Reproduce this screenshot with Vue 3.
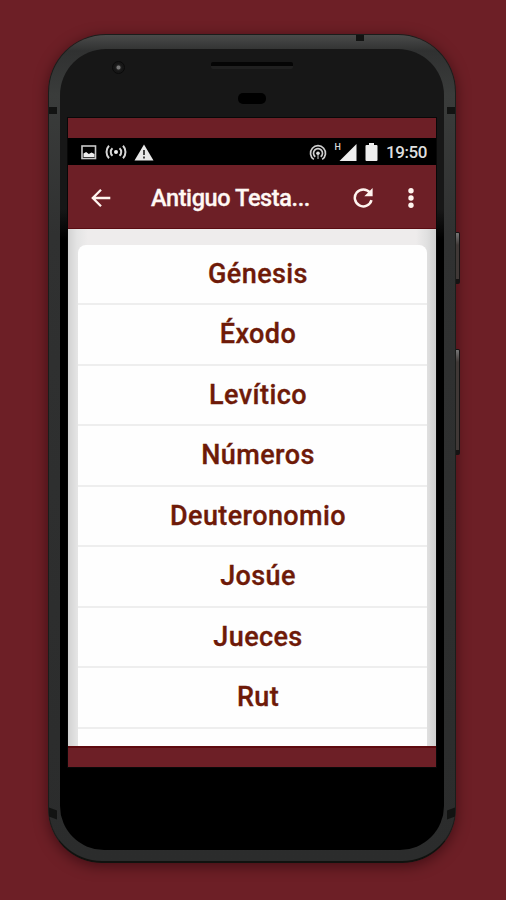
<template>
  <div class="page">
    <div class="phone">
      <i class="button power"></i>
      <i class="button volume"></i>
      <i class="band band-top"></i>
      <i class="band band-left"></i>
      <i class="band band-right"></i>
      <i class="band band-bottom-left"></i>
      <i class="band band-bottom-right"></i>
      <div class="face">
        <i class="camera"></i>
        <i class="speaker"></i>
        <i class="sensor"></i>
        <div class="screen">
          <div class="status-bar">
            <svg class="icon-image" width="16" height="15" viewBox="0 0 16 15">
              <rect x="1" y="1" width="13.5" height="12.5" fill="none" stroke="#c9c9c9" stroke-width="1.6" />
              <path d="M2.5 12V8.500l2.600-1.500 2.700 2L10.500 7.500l3 1.500v3z" fill="#eee" />
            </svg>
            <svg class="icon-cast" width="22" height="16" viewBox="0 0 22 16" fill="none" stroke="#d6d6d6" stroke-width="2">
              <circle cx="11" cy="8" r="2" fill="#eee" stroke="none" />
              <path d="M7.500 4.200a5 5 0 0 0 0 7.600M14.500 4.200a5 5 0 0 1 0 7.600M4 1.800a9 9 0 0 0 0 12.400M18 1.800a9 9 0 0 1 0 12.400" />
            </svg>
            <svg class="icon-warning" width="20" height="17" viewBox="0 0 20 17">
              <path d="M10 .5L19.500 16.500H.5z" fill="#e9e9e9" />
              <path d="M10 6v5M10 12.500v2" stroke="#444" stroke-width="2" />
            </svg>
            <svg class="icon-hotspot" width="18" height="17" viewBox="0 0 18 17" fill="none" stroke="#cfcfcf" stroke-width="1.700">
              <circle cx="9" cy="9.200" r="1.800" fill="#ddd" stroke="none" />
              <path d="M4.800 15.400a7.500 7.500 0 1 1 8.400 0M6.300 12.800a4.500 4.500 0 1 1 5.400 0" />
              <path d="M9 10v5" stroke-width="1" />
            </svg>
            <span class="network">H</span>
            <svg class="icon-signal" width="18" height="17" viewBox="0 0 18 17">
              <path d="M17.500 0v17H.5z" fill="#eee" />
            </svg>
            <svg class="icon-battery" width="13" height="18" viewBox="0 0 13 18">
              <path d="M4 0h5v2h2.500q1 0 1 1v14q0 1-1 1h-10q-1 0-1-1V3q0-1 1-1H4z" fill="#eee" />
            </svg>
            <span class="clock">19:50</span>
          </div>
          <div class="app-bar">
            <svg class="icon-back" width="20" height="18" viewBox="0 0 20 18" fill="none" stroke="#fff4ef" stroke-width="2.300">
              <path d="M19.300 9H2M10 .8L1.800 9l8.200 8.200" />
            </svg>
            <h1 class="title">Antiguo Testa...</h1>
            <svg class="icon-refresh" width="20" height="21" viewBox="0 0 20 21">
              <path d="M16.900 5.500A8.500 8.500 0 1 0 18.500 13.200" fill="none" stroke="#fff4ef" stroke-width="2.500" />
              <path d="M19.600 1v8.300h-8.300z" fill="#fff4ef" />
            </svg>
            <svg class="icon-more" width="6" height="20" viewBox="0 0 6 20" fill="#fff4ef">
              <circle cx="3" cy="2.700" r="2.700" />
              <circle cx="3" cy="10" r="2.700" />
              <circle cx="3" cy="17.300" r="2.700" />
            </svg>
          </div>
          <div class="content">
            <ul class="books">
              <li v-for="book in books" :key="book" class="book">{{ book }}</li>
            </ul>
          </div>
        </div>
      </div>
    </div>
  </div>
</template>

<script setup>
import { ref } from 'vue';

const books = ref([
  'Génesis',
  'Éxodo',
  'Levítico',
  'Números',
  'Deuteronomio',
  'Josúe',
  'Jueces',
  'Rut'
]);
</script>

<style>
body {
  background: #6d1f26;
}
</style>

<style scoped>
.page {
  box-sizing: border-box;
  height: 900px;
  padding: 34px 50px 37px 48px;
  overflow: hidden;
  background: #6d1f26;
  font-family: Roboto, "Liberation Sans", sans-serif;
}

.phone {
  position: relative;
  box-sizing: border-box;
  height: 829px;
  padding: 14px 11px 11px;
  border: 1px solid #1b1d1b;
  border-bottom: 2px solid #10120f;
  border-radius: 58px 58px 54px 54px;
  background: linear-gradient(#4a4b4a, #303131 16px, #3a3c3b 60px, #303131 200px, #2b2c2c);
  box-shadow: 0 3px 14px rgba(30, 0, 8, 0.55);
}

.face {
  position: relative;
  box-sizing: border-box;
  height: 100%;
  padding: 69px 8px 0;
  border-radius: 46px 46px 44px 44px;
  background: linear-gradient(#171717 160px, #000 190px);
}

.button {
  position: absolute;
  right: -5px;
  width: 3px;
  border: solid #161313;
  border-width: 1px 1px 5px 0;
  border-radius: 0 2px 2px 0;
  background: linear-gradient(#777, #403836 12px);
}

.power {
  top: 197px;
  height: 46px;
}

.volume {
  top: 314px;
  height: 100px;
}

.band {
  position: absolute;
  background: #121312;
}

.band-top {
  top: 0;
  left: 307px;
  width: 8px;
  height: 6px;
}

.band-left,
.band-right {
  top: 72px;
  width: 8px;
  height: 7px;
}

.band-left,
.band-bottom-left {
  left: 0;
}

.band-right,
.band-bottom-right {
  right: 0;
}

.band-bottom-left,
.band-bottom-right {
  top: 774px;
  width: 8px;
  height: 9px;
}

.band-bottom-left {
  transform: skewY(20deg);
}

.band-bottom-right {
  transform: skewY(-20deg);
}

.camera {
  position: absolute;
  top: 12px;
  left: 52px;
  width: 11px;
  height: 11px;
  border: 1px solid #0a0a0a;
  border-radius: 50%;
  background: radial-gradient(#777 0 1.5px, #222 2.5px, #161616 4px);
}

.speaker {
  position: absolute;
  top: 13px;
  left: 151px;
  width: 82px;
  height: 7px;
  border-top: 4px solid #050505;
  border-radius: 2px;
  box-sizing: border-box;
  background: #202020;
}

.sensor {
  position: absolute;
  top: 44px;
  left: 178px;
  width: 28px;
  height: 11px;
  border-radius: 5px;
  background: #000;
}

.screen {
  box-sizing: border-box;
  height: 649px;
  padding-top: 20px;
  background: #6d1f26;
  box-shadow: 0 0 0 1px #080808;
}

.status-bar {
  display: flex;
  align-items: center;
  box-sizing: border-box;
  height: 27px;
  padding: 1px 8px 0 13px;
  background: #000;
}

.icon-cast {
  margin-left: 8px;
}

.icon-warning {
  margin-left: 7px;
}

.icon-hotspot {
  margin-left: auto;
}

.network {
  align-self: flex-start;
  margin: 3px 0 0 8px;
  color: #d8d8d8;
  font-size: 9px;
  font-weight: 500;
  line-height: 11px;
}

.icon-signal {
  margin-left: -2px;
}

.icon-battery {
  margin-left: 8px;
}

.clock {
  width: 42px;
  margin-left: 8px;
  color: #dedede;
  font-size: 17px;
  font-weight: 500;
  line-height: 26px;
  letter-spacing: -0.4px;
  white-space: nowrap;
}

.app-bar {
  display: flex;
  align-items: center;
  box-sizing: border-box;
  height: 64px;
  padding: 2px 22px 0 23px;
  border-bottom: 1px solid #5a0c12;
}

.title {
  flex: 1;
  margin: 0 0 0 40px;
  color: #fff8f4;
  font-size: 23.5px;
  font-weight: 500;
  line-height: 30px;
  letter-spacing: -0.4px;
  white-space: nowrap;
  -webkit-text-stroke: 0.3px #fff8f4;
}

.icon-more {
  margin-left: 35px;
}

.content {
  box-sizing: border-box;
  height: 519px;
  padding: 16px 9px 0 10px;
  overflow: hidden;
  border-bottom: 2px solid #5e0a0f;
  background: linear-gradient(90deg, #d2d2d2, #e4e4e4 9px, #eeecec 20px, #eeecec 348px, #e0e0e0 359px, #cfcfcf);
}

.books {
  height: 520px;
  margin: 0;
  padding: 0;
  border-radius: 8px 8px 0 0;
  background: #fefefe;
  list-style: none;
}

.book {
  box-sizing: border-box;
  height: 60.5px;
  padding-left: 11px;
  border-bottom: 2px solid #eee;
  color: #6e1a08;
  font-size: 27px;
  font-weight: 500;
  line-height: 58px;
  letter-spacing: 0.4px;
  text-align: center;
  -webkit-text-stroke: 0.35px #6e1a08;
}

.book:first-child {
  height: 60px;
}
</style>
